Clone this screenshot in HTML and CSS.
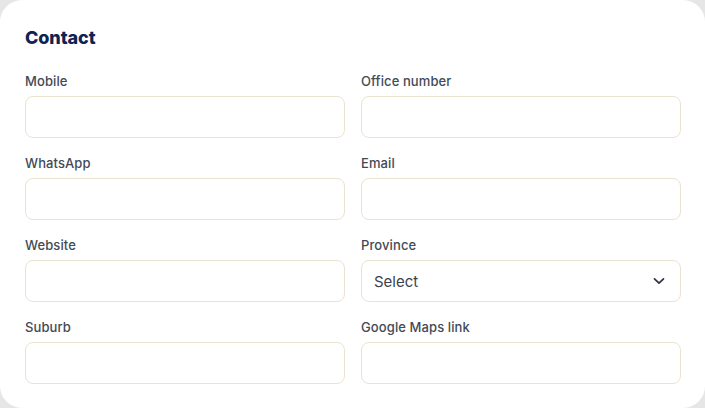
FILE: index.html
```html
<!DOCTYPE html>
<html>
<head>
<meta charset="utf-8">
<link rel="stylesheet" href="styles.css">
</head>
<body>
<div class="card">
  <h2 class="title">Contact</h2>
  <div class="grid">
    <div class="field"><label>Mobile</label><div class="input"></div></div>
    <div class="field"><label>Office number</label><div class="input"></div></div>
    <div class="field"><label>WhatsApp</label><div class="input"></div></div>
    <div class="field"><label>Email</label><div class="input"></div></div>
    <div class="field"><label>Website</label><div class="input"></div></div>
    <div class="field"><label>Province</label>
      <div class="input select"><span>Select</span>
        <svg width="12" height="8" viewBox="0 0 12 8"><path d="M1.5 1.8 L6 6.2 L10.5 1.8" fill="none" stroke="#2f3440" stroke-width="1.7" stroke-linecap="round" stroke-linejoin="round"/></svg>
      </div>
    </div>
    <div class="field"><label>Suburb</label><div class="input"></div></div>
    <div class="field"><label>Google Maps link</label><div class="input"></div></div>
  </div>
</div>
</body>
</html>
```
FILE: styles.css
```css
html, body { margin: 0; padding: 0; }
body {
  background: #e6e6e6;
  width: 705px;
  height: 408px;
  overflow: hidden;
  font-family: "Inter", "Noto Sans", sans-serif;
}
.card {
  background: #ffffff;
  width: 705px;
  height: 408px;
  box-sizing: border-box;
  border-radius: 22px;
  padding: 26px 24px 0 25px;
}
.title {
  margin: 0;
  font-family: "Inter", sans-serif;
  font-weight: 800;
  font-size: 18px;
  line-height: 24px;
  color: #0f2352;
  letter-spacing: -0.1px;
}
.grid {
  margin-top: 22px;
  display: grid;
  grid-template-columns: 320px 320px;
  column-gap: 16px;
  row-gap: 16px;
}
.field { display: flex; flex-direction: column; }
.field label {
  font-size: 13px;
  line-height: 18px;
  font-weight: 500;
  color: #434a56;
  margin-bottom: 6px;
  letter-spacing: 0.1px;
}
.input {
  height: 42px;
  box-sizing: border-box;
  border: 1px solid #ebe3d1;
  border-radius: 8px;
  background: #fff;
}
.select {
  display: flex;
  align-items: center;
  justify-content: space-between;
  padding: 0 15px 0 12px;
}
.select span {
  font-size: 15px;
  color: #3d424c;
}
```
